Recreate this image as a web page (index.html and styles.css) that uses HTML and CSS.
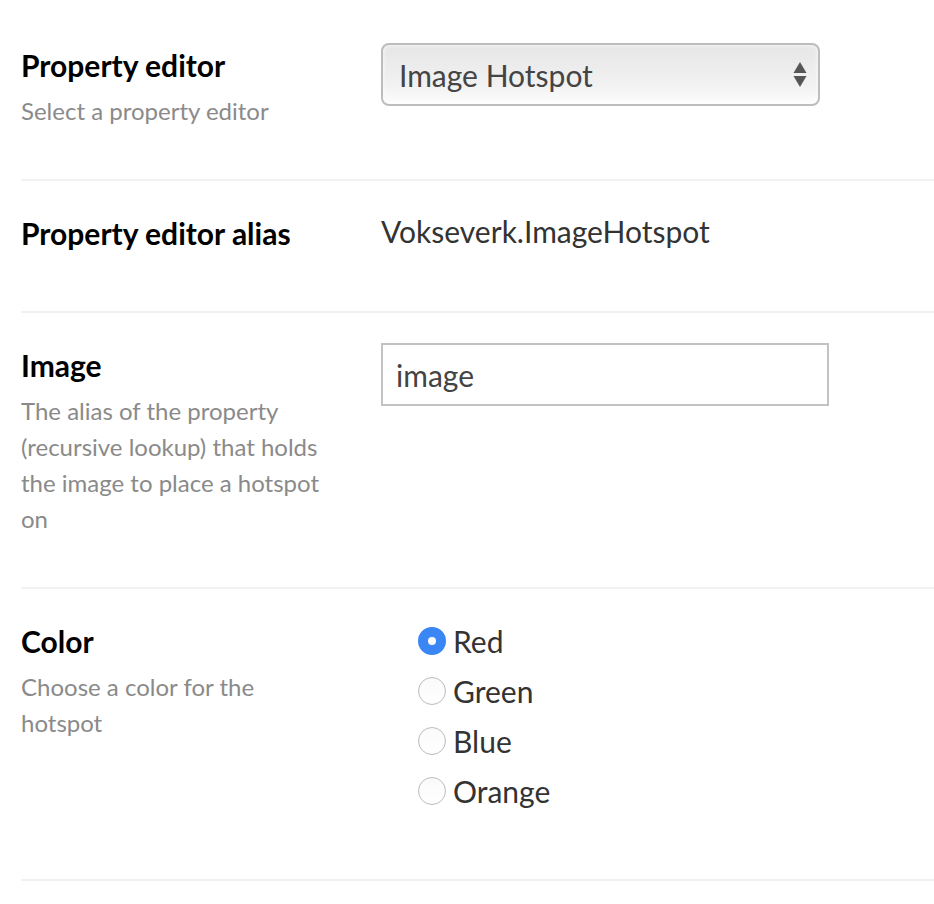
FILE: index.html
```html
<!DOCTYPE html>
<html>
<head>
<meta charset="utf-8">
<link rel="stylesheet" href="styles.css">
</head>
<body>
<div class="form">
  <div class="row">
    <div class="label-col">
      <div class="label">Property editor</div>
      <div class="desc">Select a property editor</div>
    </div>
    <div class="control-col">
      <div class="select">
        <span class="select-text">Image Hotspot</span>
        <svg class="arrows" width="14" height="28" viewBox="0 0 14 28">
          <polygon points="7,1 13.5,12 0.5,12" fill="#555"/>
          <polygon points="0.5,15 13.5,15 7,26" fill="#555"/>
        </svg>
      </div>
    </div>
  </div>
  <div class="row row-alias">
    <div class="label-col">
      <div class="label">Property editor alias</div>
    </div>
    <div class="control-col">
      <div class="alias">Vokseverk.ImageHotspot</div>
    </div>
  </div>
  <div class="row">
    <div class="label-col">
      <div class="label">Image</div>
      <div class="desc">The alias of the property (recursive lookup) that holds the image to place a hotspot on</div>
    </div>
    <div class="control-col">
      <div class="input">image</div>
    </div>
  </div>
  <div class="row row-color">
    <div class="label-col">
      <div class="label">Color</div>
      <div class="desc">Choose a color for the hotspot</div>
    </div>
    <div class="control-col">
      <ul class="radios">
        <li class="radio-item"><span class="radio checked"></span><span class="radio-label">Red</span></li>
        <li class="radio-item"><span class="radio"></span><span class="radio-label">Green</span></li>
        <li class="radio-item"><span class="radio"></span><span class="radio-label">Blue</span></li>
        <li class="radio-item"><span class="radio"></span><span class="radio-label">Orange</span></li>
      </ul>
    </div>
  </div>
</div>
</body>
</html>
```
FILE: styles.css
```css
html, body {
  margin: 0;
  padding: 0;
  background: #fff;
}
body {
  font-family: Lato, "Open Sans", sans-serif;
  color: #333;
}
.form {
  padding-top: 13px;
  margin-left: 21px;
}
.row {
  display: flex;
  gap: 40px;
  padding: 30px 0 50px;
  border-bottom: 2px solid #f2f2f2;
}
.label-col {
  width: 320px;
  flex-shrink: 0;
  padding-top: 4px;
}
.label {
  font-weight: 700;
  font-size: 30px;
  line-height: 36px;
  color: #000;
}
.desc {
  margin-top: 10px;
  font-size: 24px;
  line-height: 36px;
  color: #8a8a8a;
}
.control-col {
  flex: 1;
}
.select {
  box-sizing: border-box;
  width: 439px;
  height: 63px;
  border: 2px solid #bdbdbd;
  border-radius: 8px;
  background: linear-gradient(#e6e6e6, #f2f2f2 70%, #fdfdfd);
  box-shadow: inset 0 0 4px rgba(255,255,255,0.9);
  display: flex;
  align-items: center;
  justify-content: space-between;
  padding: 0 11px 0 16px;
}
.select-text {
  font-size: 30px;
  color: #444;
}
.arrows {
  display: block;
}
.row-alias {
  padding-bottom: 60px;
}
.alias {
  padding-top: 2px;
  font-size: 30px;
  line-height: 36px;
  color: #333;
}
.input {
  box-sizing: border-box;
  width: 448px;
  height: 63px;
  border: 2px solid #c2c2c2;
  padding: 0 13px;
  display: flex;
  align-items: center;
  font-size: 30px;
  color: #444;
}
.radios {
  list-style: none;
  margin: 0 0 13px 37px;
  padding: 0;
}
.radio-item {
  display: flex;
  align-items: center;
  height: 50px;
}
.radio-item:first-child {
  margin-top: -3px;
}
.radio {
  box-sizing: border-box;
  width: 28px;
  height: 28px;
  border-radius: 50%;
  border: 1.5px solid #bcbcbc;
  background: linear-gradient(#fafafa, #ffffff);
  margin-right: 7px;
  flex-shrink: 0;
}
.radio.checked {
  border: 10px solid #3a86f4;
  background: #fff;
}
.radio-label {
  font-size: 30px;
  color: #333;
}
```
